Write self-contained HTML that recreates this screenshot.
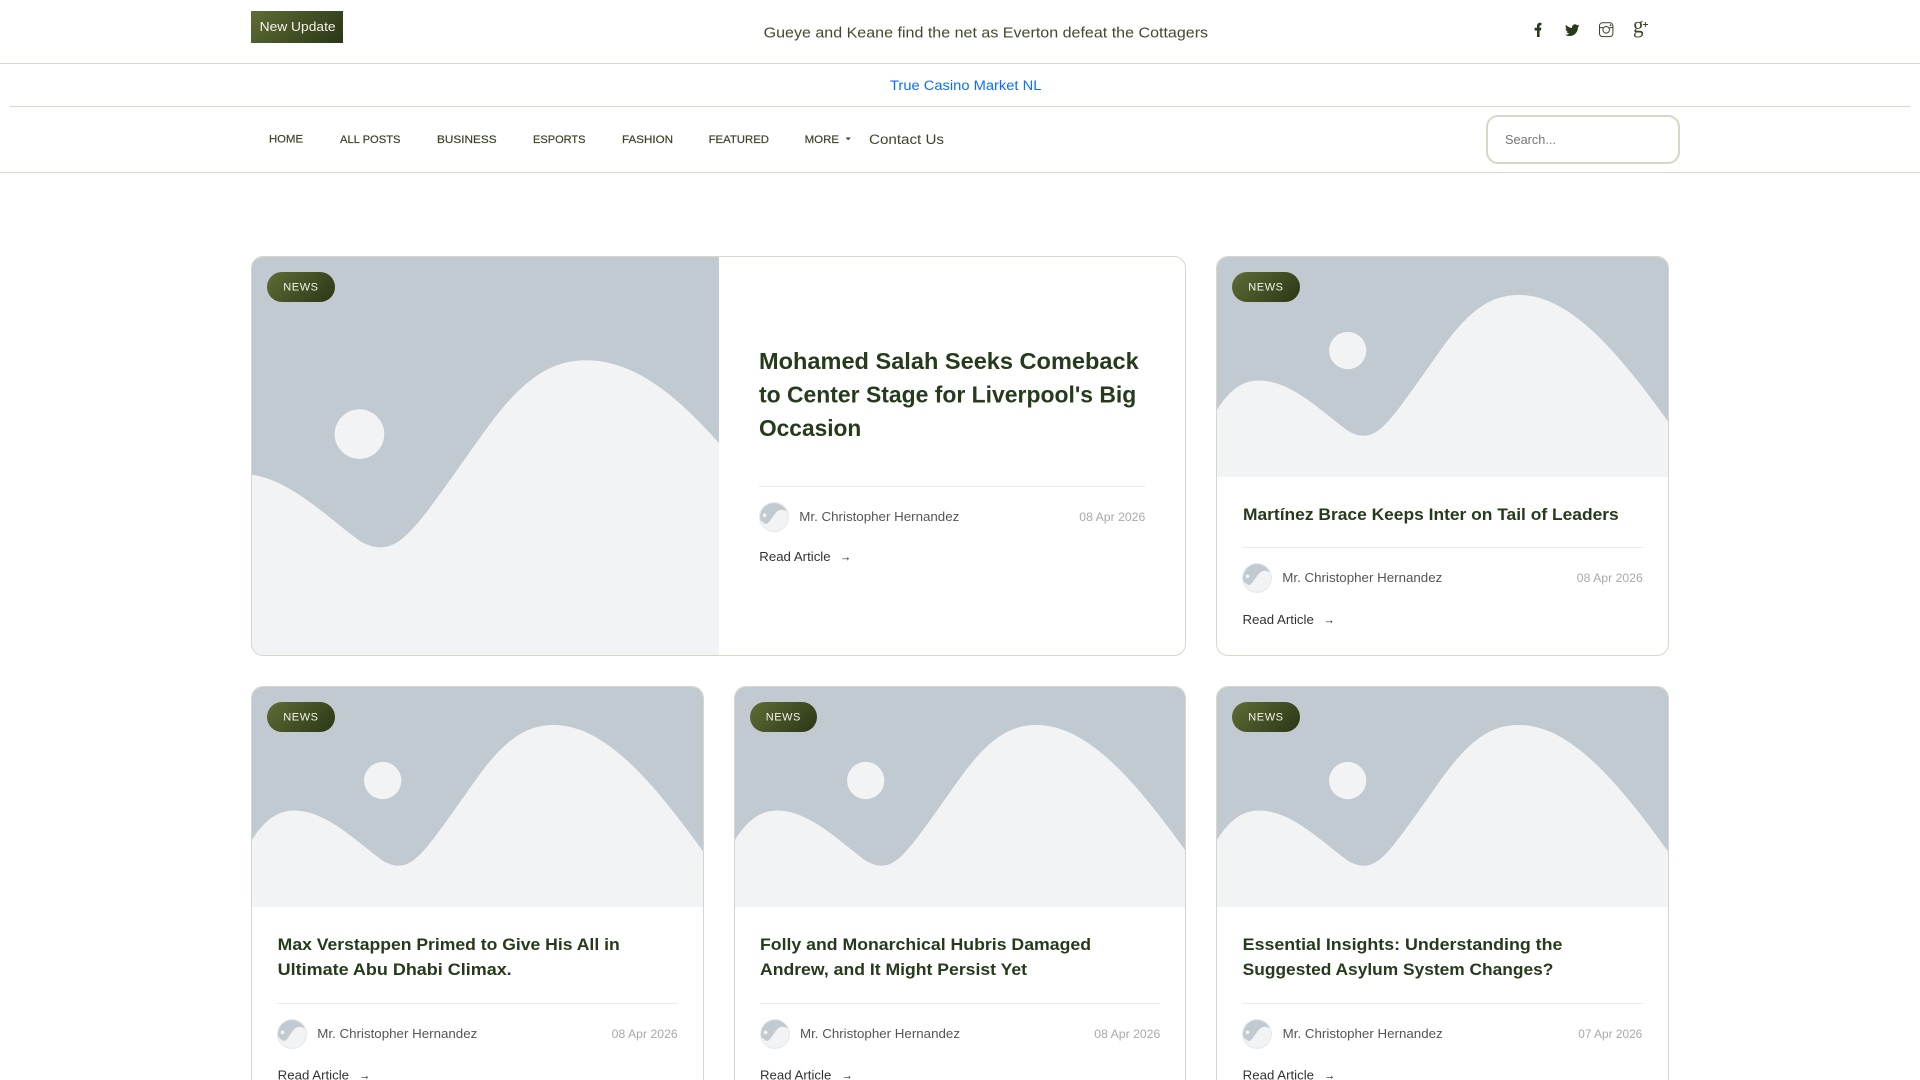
<!DOCTYPE html>
<html lang="en">
<head>
<meta charset="utf-8">
<title>News</title>
<style>
html,body{margin:0;padding:0;width:1920px;height:1080px;overflow:hidden;background:#fff}
body{position:relative;font-family:"Liberation Sans",sans-serif}
.abs{position:absolute}
.line{position:absolute;height:1px;background:#d8d7ca}
.card{position:absolute;box-sizing:border-box;border:1px solid #d8d6c8;border-radius:12px;background:#fff;overflow:hidden}
.low{height:394px;border-bottom:none;border-radius:12px 12px 0 0}
.card svg{position:absolute;left:0;top:0;display:block}
.pill{position:absolute;width:68px;height:30px;border-radius:15px;background:linear-gradient(135deg,#5f6d36,#2a3616)}
.av{position:absolute;width:30px;height:30px;border-radius:50%;overflow:hidden;box-sizing:border-box;border:1px solid #e8eaec}
.av svg{display:block;position:absolute;left:-1px;top:-1px}
.dv{position:absolute;height:1px;background:#eceded}
#t{position:absolute;left:0;top:0;display:block}
text{font-family:"Liberation Sans",sans-serif}
.ti{font-weight:700;fill:#263a1c}
.nm{font-size:13px;fill:#555}
.dt{font-size:12px;fill:#a9a9a9}
.rd{font-size:13px;fill:#333}
.ns{font-size:11px;fill:#f2f2ea}
.nv{font-size:11px;fill:#3b4429;stroke:#3b4429;stroke-width:.2}
</style>
</head>
<body>
<svg width="0" height="0" style="position:absolute">
<symbol id="ph" viewBox="0 0 452 300" preserveAspectRatio="xMidYMid slice">
<rect width="452" height="300" fill="#c1cad1"/>
<circle cx="131" cy="133.5" r="18.7" fill="#f1f3f5"/>
<path fill="#f1f3f5" d="M0 192.8C12 174 25 163.5 42 163.5C75 163.5 105 195 132 214.5C138 217.5 142 218.8 147 218.8C165 218.8 178 198 222 136C250 96 272 77.8 302 77.8C350 77.8 395 125 452 204.5V300H0Z"/>
</symbol>
</svg>

<div class="abs" style="left:251px;top:11px;width:92px;height:32px;background:linear-gradient(135deg,#5f6d36,#2a3616)"></div>
<div class="line" style="left:0;top:63px;width:1920px"></div>
<div class="line" style="left:10px;top:106px;width:1900px"></div>
<div class="line" style="left:0;top:172px;width:1920px"></div>
<div class="abs" style="left:1485.5px;top:115px;width:194px;height:49px;box-sizing:border-box;border:2px solid #d9d6c6;border-radius:12px"></div>

<div class="card" style="left:251px;top:256px;width:935px;height:400px">
  <svg width="467" height="398"><use href="#ph" width="467" height="398"/></svg>
</div>
<div class="pill" style="left:267px;top:272px"></div>
<div class="dv" style="left:759px;top:486px;width:386px"></div>
<div class="av" style="left:759px;top:502px"><svg width="30" height="30"><use href="#ph" width="30" height="30"/></svg></div>

<div class="card" style="left:1216px;top:256px;width:452.7px;height:400px">
  <svg width="451" height="220"><use href="#ph" width="451" height="220"/></svg>
</div>
<div class="pill" style="left:1232px;top:272px"></div>
<div class="dv" style="left:1242px;top:547px;width:401px"></div>
<div class="av" style="left:1242px;top:563px"><svg width="30" height="30"><use href="#ph" width="30" height="30"/></svg></div>

<div class="card low" style="left:251px;top:686px;width:452.7px">
  <svg width="451" height="220"><use href="#ph" width="451" height="220"/></svg>
</div>
<div class="pill" style="left:267px;top:702px"></div>
<div class="dv" style="left:277px;top:1003px;width:401px"></div>
<div class="av" style="left:277px;top:1019px"><svg width="30" height="30"><use href="#ph" width="30" height="30"/></svg></div>

<div class="card low" style="left:733.7px;top:686px;width:452.7px">
  <svg width="451" height="220"><use href="#ph" width="451" height="220"/></svg>
</div>
<div class="pill" style="left:749.7px;top:702px;width:67.5px"></div>
<div class="dv" style="left:760px;top:1003px;width:400px"></div>
<div class="av" style="left:760px;top:1019px"><svg width="30" height="30"><use href="#ph" width="30" height="30"/></svg></div>

<div class="card low" style="left:1216px;top:686px;width:452.7px">
  <svg width="451" height="220"><use href="#ph" width="451" height="220"/></svg>
</div>
<div class="pill" style="left:1232px;top:702px"></div>
<div class="dv" style="left:1242px;top:1003px;width:401px"></div>
<div class="av" style="left:1242px;top:1019px"><svg width="30" height="30"><use href="#ph" width="30" height="30"/></svg></div>

<svg id="t" width="1920" height="1080" viewBox="0 0 1920 1080">
  <text x="259.6" y="31" font-size="13" fill="#f3f3ea" textLength="76" lengthAdjust="spacingAndGlyphs">New Update</text>
  <text x="763.6" y="37.7" font-size="15" fill="#3f4a30" textLength="444.5" lengthAdjust="spacingAndGlyphs">Gueye and Keane find the net as Everton defeat the Cottagers</text>
  <text x="890" y="90" font-size="13.5" fill="#0d6efd" textLength="151.4" lengthAdjust="spacingAndGlyphs">True Casino Market NL</text>

  <text class="nv" x="269" y="142.3" textLength="34" lengthAdjust="spacingAndGlyphs">HOME</text>
  <text class="nv" x="340" y="143" textLength="60.5" lengthAdjust="spacingAndGlyphs">ALL POSTS</text>
  <text class="nv" x="437" y="143" textLength="59.6" lengthAdjust="spacingAndGlyphs">BUSINESS</text>
  <text class="nv" x="533" y="143" textLength="52.5" lengthAdjust="spacingAndGlyphs">ESPORTS</text>
  <text class="nv" x="622" y="143" textLength="51" lengthAdjust="spacingAndGlyphs">FASHION</text>
  <text class="nv" x="708.6" y="143" textLength="60.4" lengthAdjust="spacingAndGlyphs">FEATURED</text>
  <text class="nv" x="804.6" y="143" textLength="34.4" lengthAdjust="spacingAndGlyphs">MORE</text>
  <path d="M845.5 137.5h5.4l-2.7 2.8z" fill="#3b4429"/>
  <text x="869" y="144" font-size="13.5" fill="#3b4429" textLength="75" lengthAdjust="spacingAndGlyphs">Contact Us</text>
  <text x="1505" y="144" font-size="13" fill="#777" textLength="51" lengthAdjust="spacingAndGlyphs">Search...</text>

  <path fill="#2a3a18" d="M1537 37V30.5H1534.6V27.8H1537V26C1537 23.8 1538.3 22.7 1540 22.7H1541.5V25.3H1540.5C1539.7 25.3 1539.6 25.7 1539.6 26.3V27.8H1541.4L1541 30.5H1539.6V37Z"/>
  <path fill="#2a3a18" transform="translate(1565 23) scale(.6)" d="M23.95 4.57a10 10 0 0 1-2.82.78 4.96 4.96 0 0 0 2.16-2.72c-.95.55-2 .95-3.12 1.18a4.92 4.92 0 0 0-8.38 4.48C7.69 8.1 4.07 6.13 1.64 3.16a4.82 4.82 0 0 0-.67 2.48c0 1.7.87 3.2 2.18 4.08a4.9 4.9 0 0 1-2.23-.62v.06c0 2.38 1.7 4.37 3.95 4.83a5 5 0 0 1-2.21.08 4.94 4.94 0 0 0 4.6 3.42A9.87 9.87 0 0 1 0 19.54a13.94 13.94 0 0 0 7.55 2.21c9.06 0 14-7.5 14-13.98 0-.21 0-.42-.02-.63a9.94 9.94 0 0 0 2.46-2.55z"/>
  <g fill="none" stroke="#3a4428" stroke-width="1">
    <rect x="1599.5" y="22.8" width="13.4" height="13.8" rx="3"/>
    <circle cx="1606.2" cy="29.8" r="3.3"/>
    <path d="M1599.5 27.6h3.6M1609.4 27.6h3.5"/>
  </g>
  <circle cx="1610.6" cy="25.2" r=".9" fill="#3a4428"/>
  <text x="1633" y="32.5" font-size="23" fill="#3a4428" textLength="10.5" lengthAdjust="spacingAndGlyphs" style="font-family:'Liberation Serif',serif">g</text>
  <path d="M1642.8 24.5h5.2M1645.4 22v5" stroke="#3a4428" stroke-width="1" fill="none"/>

  <text class="ns" x="283.3" y="290.7" textLength="34.7" lengthAdjust="spacing">NEWS</text>
  <text class="ns" x="1248.3" y="290.7" textLength="34.7" lengthAdjust="spacing">NEWS</text>
  <text class="ns" x="283.3" y="720.7" textLength="34.7" lengthAdjust="spacing">NEWS</text>
  <text class="ns" x="765.7" y="720.7" textLength="34.7" lengthAdjust="spacing">NEWS</text>
  <text class="ns" x="1248.3" y="720.7" textLength="34.7" lengthAdjust="spacing">NEWS</text>

  <text class="ti" font-size="23" x="759" y="369" textLength="379.7" lengthAdjust="spacingAndGlyphs">Mohamed Salah Seeks Comeback</text>
  <text class="ti" font-size="23" x="759" y="402.7" textLength="377.3" lengthAdjust="spacingAndGlyphs">to Center Stage for Liverpool's Big</text>
  <text class="ti" font-size="23" x="759" y="436" textLength="102.3" lengthAdjust="spacingAndGlyphs">Occasion</text>
  <text class="nm" x="799.3" y="521" textLength="160" lengthAdjust="spacingAndGlyphs">Mr. Christopher Hernandez</text>
  <text class="dt" x="1079.3" y="521" textLength="66" lengthAdjust="spacingAndGlyphs">08 Apr 2026</text>
  <text class="rd" x="759.3" y="560.8" textLength="71.3" lengthAdjust="spacingAndGlyphs">Read Article</text>
  <text class="rd" x="840.3" y="561" textLength="11" lengthAdjust="spacingAndGlyphs">→</text>

  <text class="ti" font-size="17" x="1243" y="520" textLength="375.7" lengthAdjust="spacingAndGlyphs">Martínez Brace Keeps Inter on Tail of Leaders</text>
  <text class="nm" x="1282.3" y="582" textLength="160" lengthAdjust="spacingAndGlyphs">Mr. Christopher Hernandez</text>
  <text class="dt" x="1576.8" y="582" textLength="66" lengthAdjust="spacingAndGlyphs">08 Apr 2026</text>
  <text class="rd" x="1242.5" y="624" textLength="71.3" lengthAdjust="spacingAndGlyphs">Read Article</text>
  <text class="rd" x="1323.8" y="624" textLength="11" lengthAdjust="spacingAndGlyphs">→</text>

  <text class="ti" font-size="17" x="277.7" y="950" textLength="342" lengthAdjust="spacingAndGlyphs">Max Verstappen Primed to Give His All in</text>
  <text class="ti" font-size="17" x="277.7" y="975" textLength="234" lengthAdjust="spacingAndGlyphs">Ultimate Abu Dhabi Climax.</text>
  <text class="nm" x="317.3" y="1038" textLength="160" lengthAdjust="spacingAndGlyphs">Mr. Christopher Hernandez</text>
  <text class="dt" x="611.7" y="1038" textLength="66" lengthAdjust="spacingAndGlyphs">08 Apr 2026</text>
  <text class="rd" x="277.7" y="1079.5" textLength="71.3" lengthAdjust="spacingAndGlyphs">Read Article</text>
  <text class="rd" x="359.3" y="1079.5" textLength="11" lengthAdjust="spacingAndGlyphs">→</text>

  <text class="ti" font-size="17" x="760" y="950" textLength="331" lengthAdjust="spacingAndGlyphs">Folly and Monarchical Hubris Damaged</text>
  <text class="ti" font-size="17" x="760" y="975" textLength="267" lengthAdjust="spacingAndGlyphs">Andrew, and It Might Persist Yet</text>
  <text class="nm" x="800" y="1038" textLength="160" lengthAdjust="spacingAndGlyphs">Mr. Christopher Hernandez</text>
  <text class="dt" x="1094.3" y="1038" textLength="66" lengthAdjust="spacingAndGlyphs">08 Apr 2026</text>
  <text class="rd" x="760" y="1079.5" textLength="71.3" lengthAdjust="spacingAndGlyphs">Read Article</text>
  <text class="rd" x="841.8" y="1079.5" textLength="11" lengthAdjust="spacingAndGlyphs">→</text>

  <text class="ti" font-size="17" x="1242.7" y="950" textLength="319.7" lengthAdjust="spacingAndGlyphs">Essential Insights: Understanding the</text>
  <text class="ti" font-size="17" x="1242.7" y="975" textLength="310.7" lengthAdjust="spacingAndGlyphs">Suggested Asylum System Changes?</text>
  <text class="nm" x="1282.7" y="1038" textLength="160" lengthAdjust="spacingAndGlyphs">Mr. Christopher Hernandez</text>
  <text class="dt" x="1578.3" y="1038" textLength="64" lengthAdjust="spacingAndGlyphs">07 Apr 2026</text>
  <text class="rd" x="1242.7" y="1079.5" textLength="71.3" lengthAdjust="spacingAndGlyphs">Read Article</text>
  <text class="rd" x="1324.3" y="1079.5" textLength="11" lengthAdjust="spacingAndGlyphs">→</text>
</svg>
</body>
</html>
